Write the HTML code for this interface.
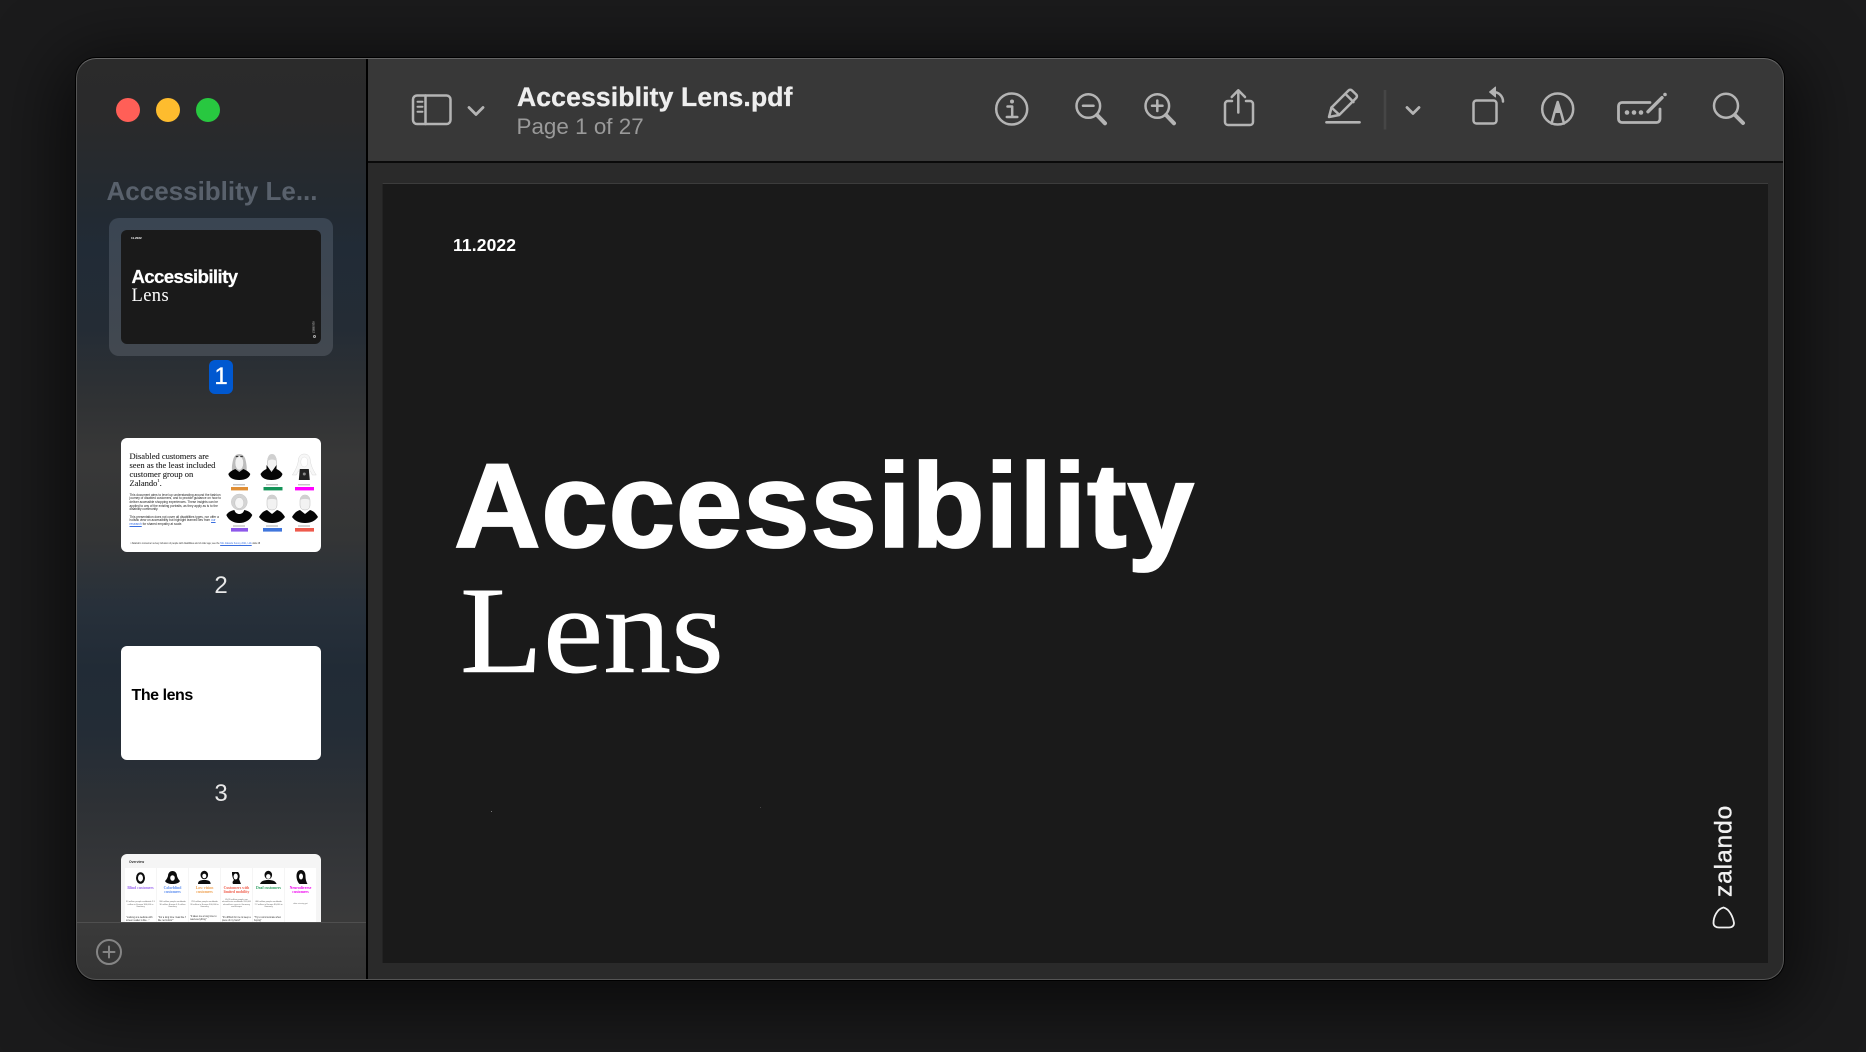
<!DOCTYPE html>
<html lang="en"><head><meta charset="utf-8"><title>Accessiblity Lens.pdf</title>
<style>
*{box-sizing:border-box}
html,body{margin:0;padding:0;width:1866px;height:1052px;overflow:hidden;background:#1b1b1c;font-family:"Liberation Sans",sans-serif}
.a{position:absolute}
.t{position:absolute;white-space:nowrap;line-height:1}
.s{font-family:"Liberation Serif",serif}
#win{left:76px;top:58px;width:1708px;height:922px;border-radius:20px;overflow:hidden;box-shadow:0 0 0 1px #000,0 14px 70px 14px rgba(0,0,0,.62)}
#in{left:-76px;top:-58px;width:1866px;height:1052px}
#side{left:76px;top:58px;width:291px;height:922px;background:linear-gradient(180deg,#2b2b2b 0,#2a2a2b 60px,#232a31 145px,#212b36 190px,#242c35 270px,#303234 345px,#383838 400px,#343536 480px,#27303a 550px,#212b36 610px,#232c36 670px,#2e3135 750px,#37383a 830px,#3a3a3a 864px,#343434 922px)}
#tool{left:368px;top:58px;width:1416px;height:103px;background:#383838}
#cont{left:368px;top:163px;width:1416px;height:817px;background:#2a2a2a}
#page{left:382px;top:183px;width:1386px;height:780px;background:#1a1a1a;border-top:1px solid #3c3c3c;border-left:1px solid #232323}
.th{position:absolute;left:121px;width:200px;height:114px;border-radius:6px;overflow:hidden;background:#fff}
.num{position:absolute;left:121px;width:200px;text-align:center;font-size:24px;line-height:1;color:#e8e8e8}
#frame{left:76px;top:58px;width:1708px;height:922px;border-radius:20px;border:1.5px solid #555;border-top-color:#666;pointer-events:none}
svg{position:absolute;left:0;top:0}
</style></head>
<body>
<div class="a" id="win"><div class="a" id="in">
  <div class="a" id="side"></div>
  <div class="a" style="left:366px;top:58px;width:2px;height:922px;background:#000"></div>
  <div class="a" id="tool"></div>
  <div class="a" style="left:368px;top:161px;width:1416px;height:2px;background:#0a0a0a"></div>
  <div class="a" id="cont"></div>
  <div class="a" id="page"></div>

  <!-- main page -->
  <div class="t" style="left:453px;top:236.7px;font-size:17.5px;font-weight:700;color:#fff;letter-spacing:.12px">11.2022</div>
  <div class="t" style="left:454px;top:446.4px;font-size:120px;font-weight:700;color:#fff;letter-spacing:.53px;-webkit-text-stroke:1.8px #fff">Accessibility</div>
  <div class="t s" style="left:459.5px;top:569px;font-size:124px;color:#fff;transform-origin:0 0;transform:scaleX(1.095);-webkit-text-stroke:.6px #fff">Lens</div>
  <div class="t" style="left:1733px;top:897px;font-size:24.5px;color:#f2f2f2;transform-origin:0 0;transform:rotate(-90deg) translateY(-20.7px);letter-spacing:.9px;-webkit-text-stroke:.35px #f2f2f2">zalando</div>
  <div class="a" style="left:491px;top:811px;width:1px;height:1px;background:#777"></div>
  <div class="a" style="left:760px;top:807px;width:1px;height:1px;background:#444"></div>

  <!-- toolbar text -->
  <div class="t" style="left:517px;top:83.6px;font-size:26.5px;font-weight:700;color:#eee;letter-spacing:.15px;-webkit-text-stroke:.3px #eee">Accessiblity Lens.pdf</div>
  <div class="t" style="left:516.5px;top:115.5px;font-size:22.4px;color:#9a9a9a;letter-spacing:.02px">Page 1 of 27</div>

  <!-- sidebar -->
  <div class="a" style="left:116px;top:98px;width:24px;height:24px;border-radius:50%;background:#ff5f57"></div>
  <div class="a" style="left:156px;top:98px;width:24px;height:24px;border-radius:50%;background:#febc2e"></div>
  <div class="a" style="left:196px;top:98px;width:24px;height:24px;border-radius:50%;background:#28c840"></div>
  <div class="t" style="left:106.5px;top:177.7px;font-size:26px;font-weight:700;color:#59616c">Accessiblity Le...</div>

  <div class="a" style="left:109px;top:218px;width:224px;height:138px;border-radius:10px;background:linear-gradient(180deg,#3a4552,#424850)"></div>
  <div class="th" style="top:230px;background:#1a1a1a">
    <div class="t" style="left:10px;top:7px;font-size:3px;font-weight:700;color:#fff">11.2022</div>
    <div class="t" style="left:10.5px;top:38.300px;font-size:18.5px;font-weight:700;color:#fff;letter-spacing:-.55px;-webkit-text-stroke:.25px #fff">Accessibility</div>
    <div class="t s" style="left:10.5px;top:56.500px;font-size:18.5px;color:#fff;letter-spacing:.4px">Lens</div>
    <div class="t" style="left:195px;top:103px;font-size:3.4px;color:#bbb;transform-origin:0 0;transform:rotate(-90deg) translateY(-3.4px)">zalando</div>
    <div class="a" style="left:192px;top:105px;width:3px;height:3px;border:.5px solid #aaa;border-radius:50%"></div>
  </div>
  <div class="a" style="left:209px;top:360px;width:24px;height:34px;border-radius:6px;background:#0058d0"></div>
  <div class="t" style="left:209px;top:365px;width:24px;text-align:center;font-size:24px;color:#fff;font-weight:400;-webkit-text-stroke:.3px #fff">1</div>

  <!-- thumb 2 -->
  <div class="th" style="top:438px;filter:blur(.3px)">
    <div class="t s" style="left:8.5px;top:13.800px;font-size:8.5px;color:#222;-webkit-text-stroke:.1px #222">Disabled customers are</div>
    <div class="t s" style="left:8.5px;top:22.800px;font-size:8.5px;color:#222;-webkit-text-stroke:.1px #222">seen as the least included</div>
    <div class="t s" style="left:8.5px;top:31.800px;font-size:8.5px;color:#222;-webkit-text-stroke:.1px #222">customer group on</div>
    <div class="t s" style="left:8.5px;top:40.500px;font-size:8.5px;color:#222;-webkit-text-stroke:.1px #222">Zalando<sup style="font-size:4.5px;line-height:0">1</sup>.</div>
    <div class="a" style="left:8.5px;top:55.800px;width:92px;font-size:3.15px;line-height:3.67px;color:#222">This document aims to level up understanding around the fashion journey of disabled customers, and to provide guidance on how to deliver accessible shopping experiences. These insights can be applied to any of the existing portraits, as they apply as is to the disability community.</div>
    <div class="a" style="left:8.5px;top:77.800px;width:92px;font-size:3.15px;line-height:3.67px;color:#222">This presentation does not cover all disabilities types, nor offer a holistic view on accessibility but highlight learned lies from <span style="color:#3a6fe0;text-decoration:underline">our research</span> for shared empathy at scale.</div>
    <div class="t" style="left:9.3px;top:105px;font-size:2.25px;color:#333">¹ Zalando's consumer survey inclusion of people with disabilities and of older age; see the <span style="color:#3a6fe0;text-decoration:underline">SSL Zalando Survey 2021, Link</span> slide 28</div>
    <svg width="200" height="114" viewBox="0 0 200 114">
      <!-- top row -->
      <g transform="translate(118.300 17)">
        <path d="M-6 4c1-3 3-5 6-5s5 2 6 5c1 4 2 9 1 13h-14c-1-4 0-9 1-13z" fill="#bdbdbd"/>
        <ellipse cy="8" rx="4.200" ry="7" fill="#f2f2f2" stroke="#aaa" stroke-width=".3"/>
        <path d="M-3.500 1.500h2.500M1 1.500h2.500" stroke="#333" stroke-width="1.200"/>
        <path d="M-11 19c2-3 5-4 7-5l4 3 4-3c2 1 5 2 7 5-1 4-5 6-11 6s-10-2-11-6z" fill="#050505"/>
      </g>
      <g transform="translate(151 17)">
        <path d="M-4.500 7c0-5 2-7 4.500-7s4.500 2 4.500 7v4c0 3-2 5-4.500 5s-4.500-2-4.500-5z" fill="#f2f2f2" stroke="#999" stroke-width=".4"/>
        <path d="M-4.500 6c0-5 2-7 4.500-7s4.500 2 4.500 7c-3-2-6-2-9 0z" fill="#d0d0d0"/>
        <path d="M-11.500 19c2-3 4-4 6-5v-4l5 7 5-7v4c2 1 4 2 6 5-1 4-5 6-11 6s-10-2-11-6z" fill="#050505"/>
      </g>
      <g transform="translate(183.300 17)">
        <path d="M-6 6c0-5 3-7 6-7s6 2 6 7c1 6 4 11 6 14h-4l-2-4h-12l-2 4h-4c2-3 5-8 6-14z" fill="#f7f7f7" stroke="#d0d0d0" stroke-width=".4"/>
        <ellipse cy="7" rx="3.500" ry="5" fill="#fff" stroke="#ccc" stroke-width=".3"/>
        <path d="M-4.500 14h9l1 11h-11z" fill="#222"/>
        <circle cy="19" r="1.500" fill="#888"/>
      </g>
      <!-- bottom row -->
      <g transform="translate(118.300 57)">
        <circle cy="7" r="8" fill="#d4d4d4" stroke="#c0c0c0" stroke-width=".4"/>
        <ellipse cy="8" rx="4.500" ry="5.500" fill="#f5f5f5" stroke="#aaa" stroke-width=".3"/>
        <path d="M-13 20c2-3 4-4 8-5 1 3 3 4 5 4s4-1 5-4c4 1 6 2 8 5-2 5-7 8-13 8s-11-3-13-8z" fill="#050505"/>
      </g>
      <g transform="translate(151 57)">
        <path d="M-5 6c0-4 2-6 5-6s5 2 5 6v4c0 3-2 5-5 5s-5-2-5-5z" fill="#f2f2f2" stroke="#aaa" stroke-width=".4"/>
        <path d="M-5 5c0-3 2-5 5-5s5 2 5 5c-3-1.500-7-1.500-10 0z" fill="#d0d0d0"/>
        <path d="M-13 22c3-5 5-6 8-7l5 4 5-4c3 1 5 2 8 7-3 4-7 6-13 6s-10-2-13-6z" fill="#050505"/>
      </g>
      <g transform="translate(184 57)">
        <path d="M-5 6c0-4 2-6 5-6s5 2 5 6v4c0 3-2 5-5 5s-5-2-5-5z" fill="#f2f2f2" stroke="#aaa" stroke-width=".4"/>
        <path d="M-5 5c0-3 2-5 5-5s5 2 5 5c-3-1.500-7-1.500-10 0z" fill="#d0d0d0"/>
        <path d="M-13 22c3-5 5-6 8-7l5 4 5-4c3 1 5 2 8 7-3 4-7 6-13 6s-10-2-13-6z" fill="#050505"/>
      </g>
      <g fill="#aaa"><rect x="112" y="46.300" width="12" height="1"/><rect x="145" y="46.300" width="12" height="1"/><rect x="177" y="46.300" width="12" height="1"/><rect x="112" y="87.500" width="12" height="1"/><rect x="145" y="87.500" width="12" height="1"/><rect x="177" y="87.500" width="12" height="1"/></g>
      <rect x="110" y="49" width="17" height="3.400" fill="#e08f35"/>
      <rect x="142.500" y="49" width="19" height="3.400" fill="#149358"/>
      <rect x="174" y="49" width="19" height="3.400" fill="#f0f"/>
      <rect x="110" y="90" width="17" height="3.600" fill="#8d58ea"/>
      <rect x="142" y="90" width="19" height="3.600" fill="#4076dc"/>
      <rect x="174" y="90" width="19" height="3.600" fill="#ee5a4c"/>
    </svg>
  </div>
  <div class="num" style="top:573.7px">2</div>

  <!-- thumb 3 -->
  <div class="th" style="top:646px">
    <div class="t" style="left:10.5px;top:42.4px;font-size:16px;font-weight:700;color:#000;letter-spacing:-.45px">The lens</div>
  </div>
  <div class="num" style="top:782px">3</div>

  <!-- thumb 4 -->
  <div class="th" style="top:854px;background:#f5f5f5;filter:blur(.25px)">
    <div class="t" style="left:8px;top:7px;font-size:3.4px;font-weight:700;color:#333">Overview</div>
    <div class="a" style="left:4px;top:14px;width:31px;height:100px;background:#fff"></div>
    <div class="a" style="left:36px;top:14px;width:31px;height:100px;background:#fff"></div>
    <div class="a" style="left:68px;top:14px;width:31px;height:100px;background:#fff"></div>
    <div class="a" style="left:100px;top:14px;width:31px;height:100px;background:#fff"></div>
    <div class="a" style="left:132px;top:14px;width:31px;height:100px;background:#fff"></div>
    <div class="a" style="left:164px;top:14px;width:31px;height:100px;background:#fff"></div>
    <svg width="200" height="114" viewBox="0 0 200 114">
      <g fill="#0c0c0c">
        <ellipse cx="19.500" cy="24" rx="4.500" ry="5.800"/>
        <path d="M47 22c0-3 2-5 4.500-5s4.500 2 4.500 5c1 3 2 4 3 5-1 2-4 3-7.500 3s-6.500-1-7.500-3c1-1 2-2 3-5z"/>
        <ellipse cx="83.300" cy="21" rx="3.800" ry="4.300"/><path d="M77 30c0-3 2-4 6.300-4s6.300 1 6.300 4z"/>
        <path d="M111 18h6c2 2 2 5 1 7l2 5h-8c-1-2 0-3 1-4-2-3-2-6-2-8z"/>
        <ellipse cx="147.300" cy="21" rx="3.800" ry="4.300"/><path d="M139 30c1-3 4-4 8.300-4s7.300 1 8.300 4z"/>
        <path d="M175.500 22c0-4 2-6 4.500-6s4.500 2 4.500 6c0 4 1 6 2 8h-8c-2-2-3-5-3-8z"/>
      </g>
      <g fill="#fff">
        <ellipse cx="19.500" cy="24" rx="2.500" ry="3.600"/>
        <ellipse cx="51.500" cy="24" rx="2.300" ry="2.800"/>
        <ellipse cx="83.300" cy="22" rx="2" ry="2.300"/>
        <ellipse cx="114.700" cy="22.500" rx="2.100" ry="3"/>
        <ellipse cx="147.300" cy="22.500" rx="2.200" ry="2.400"/>
        <ellipse cx="180" cy="22.500" rx="2" ry="3"/>
      </g>
    </svg>
    <div class="t s" style="left:4px;width:31px;text-align:center;top:33px;font-size:3.8px;font-weight:700;color:#9a66ee">Blind customers</div>
    <div class="a s" style="left:36px;width:31px;text-align:center;top:33px;font-size:3.8px;line-height:3.8px;font-weight:700;color:#5a8cf0">Colorblind customers</div>
    <div class="a s" style="left:68px;width:31px;text-align:center;top:33px;font-size:3.8px;line-height:3.8px;font-weight:700;color:#ee9f4e">Low vision customers</div>
    <div class="a s" style="left:100px;width:31px;text-align:center;top:33px;font-size:3.8px;line-height:3.8px;font-weight:700;color:#f0604f">Customers with limited mobility</div>
    <div class="t s" style="left:132px;width:31px;text-align:center;top:33px;font-size:3.8px;font-weight:700;color:#2c9f60">Deaf customers</div>
    <div class="a s" style="left:164px;width:31px;text-align:center;top:33px;font-size:3.8px;line-height:3.8px;font-weight:700;color:#f000f0">Neurodiverse customers</div>
    <div class="a" style="left:5px;width:29px;text-align:center;top:47px;font-size:2.1px;line-height:2.5px;color:#666">39 million people worldwide 2.5 million in Europe 300,000 in Germany</div>
    <div class="a" style="left:37px;width:29px;text-align:center;top:47px;font-size:2.1px;line-height:2.5px;color:#666">300 million people worldwide 30 million Europe 4.3 million Germany</div>
    <div class="a" style="left:69px;width:29px;text-align:center;top:47px;font-size:2.1px;line-height:2.5px;color:#666">253 million people worldwide 30 million in Europe 900,000 in Germany</div>
    <div class="a" style="left:101px;width:29px;text-align:center;top:45px;font-size:2.1px;line-height:2.4px;color:#666">65-95 million people use wheelchairs worldwide 200,000 wheelchair users in Germany and Europe</div>
    <div class="a" style="left:133px;width:29px;text-align:center;top:47px;font-size:2.1px;line-height:2.5px;color:#666">466 million people worldwide 7.2 million in Europe 80,000 in Germany</div>
    <div class="a" style="left:165px;width:29px;text-align:center;top:49px;font-size:2px;line-height:2.5px;color:#777">data missing yet</div>
    <div class="a" style="left:5px;width:29px;top:62.500px;font-size:2.3px;line-height:3px;color:#333">"Looking at a website with screen reader is like..."</div>
    <div class="a" style="left:37px;width:29px;top:62.500px;font-size:2.3px;line-height:3px;color:#333">"For a long time I was like 'I like red colors'"</div>
    <div class="a" style="left:69px;width:29px;top:61.500px;font-size:2.3px;line-height:3px;color:#333">"It takes me a long time to read everything"</div>
    <div class="a" style="left:101px;width:29px;top:62.500px;font-size:2.3px;line-height:3px;color:#333">"It's difficult for me to keep a piece of my hand"</div>
    <div class="a" style="left:133px;width:29px;top:62.500px;font-size:2.3px;line-height:3px;color:#333">"Try to communicate when buying"</div>
  </div>

  <!-- footer -->
  <div class="a" style="left:77px;top:922px;width:289px;height:58px;background:linear-gradient(180deg,#3a3a3a,#343434);border-top:1.5px solid #4f4f4f"></div>

  <svg width="1866" height="1052" viewBox="0 0 1866 1052" fill="none" stroke="#b4b4b4" stroke-width="2.500" stroke-linecap="round" stroke-linejoin="round">
    <!-- sidebar toggle -->
    <rect x="413" y="95.500" width="37.500" height="28.500" rx="4"/>
    <path d="M425.500 95.500V124"/>
    <path d="M417.500 101.700h5M417.500 106.700h5M417.500 111.700h5" stroke-width="2"/>
    <path d="M469 107.500l7 7 7-7" stroke-width="2.800"/>
    <!-- info -->
    <circle cx="1011.700" cy="109" r="15.500"/>
    <circle cx="1012" cy="101.500" r="2" fill="#b4b4b4" stroke="none"/>
    <path d="M1007.500 106.500h4.700V117M1006.800 117h10.500"/>
    <!-- zoom out -->
    <circle cx="1088.300" cy="106" r="11.800"/>
    <path d="M1097 115l8 8.300" stroke-width="4"/>
    <path d="M1083 105.700h10.500"/>
    <!-- zoom in -->
    <circle cx="1157.300" cy="106" r="11.800"/>
    <path d="M1166 115l8 8.300" stroke-width="4"/>
    <path d="M1152 105.700h10.500M1157.300 100.500v10.500"/>
    <!-- share -->
    <path d="M1232 101h-4a3 3 0 0 0-3 3v18a3 3 0 0 0 3 3h22a3 3 0 0 0 3-3v-18a3 3 0 0 0-3-3h-4"/>
    <path d="M1238.300 112.500V90.500M1231.700 97l6.600-6.700 6.700 6.700"/>
    <!-- highlighter -->
    <path d="M1326.500 122.300h33" stroke-width="2.700"/>
    <path d="M1329 117l2.500-9.500 17-17a2.500 2.500 0 0 1 3.500 0l4.200 4a2.500 2.500 0 0 1 0 3.500l-17 17z"/>
    <path d="M1345.500 94l8 8M1331.500 107.500l7.500 7"/>
    <path d="M1385 90v39.500" stroke="#464646" stroke-linecap="butt"/>
    <path d="M1407 107.500l6 6 6-6" stroke-width="2.800"/>
    <!-- rotate -->
    <rect x="1473.500" y="100.500" width="23" height="23" rx="3"/>
    <path d="M1503 101.500c0-5-4-9.500-9.500-9.500"/>
    <path d="M1495.500 87v10l-6-5z" fill="#b4b4b4" stroke-width="1"/>
    <!-- markup -->
    <circle cx="1557.700" cy="109" r="15.500"/>
    <path d="M1551.500 123.500l3-11 3.200-10.500 3.300 10.500 3 11"/>
    <path d="M1557.700 102.500l-3 10h6z" fill="#b4b4b4" stroke-width="1"/>
    <!-- signature -->
    <path d="M1650 102.500h-28a3.500 3.500 0 0 0-3.500 3.500v13a3.500 3.500 0 0 0 3.500 3.500h34.500a3.500 3.500 0 0 0 3.500-3.500v-10" stroke-width="2.800"/>
    <circle cx="1627" cy="112.500" r="2.300" fill="#b4b4b4" stroke="none"/>
    <circle cx="1634" cy="112.500" r="2.300" fill="#b4b4b4" stroke="none"/>
    <circle cx="1641" cy="112.500" r="2.300" fill="#b4b4b4" stroke="none"/>
    <path d="M1648 111.700l14-14" stroke-width="3.400"/>
    <circle cx="1665" cy="94.500" r="1.800" fill="#b4b4b4" stroke="none"/>
    <!-- search -->
    <circle cx="1726" cy="105.700" r="12"/>
    <path d="M1735 115l8 8" stroke-width="4"/>
    <!-- plus -->
    <circle cx="109" cy="952" r="12" stroke="#858585" stroke-width="2"/>
    <path d="M103.500 952h11M109 946.500v11" stroke="#858585" stroke-width="2"/>
    <!-- zalando logo -->
    <path d="M1723.500 907.500C1717 909 1713.500 917 1713.500 923C1713.500 926 1716 927.500 1719 927.500H1729C1732 927.500 1734 926 1734 923C1733 917 1729.500 909 1723.500 907.500Z" stroke="#f0f0f0" stroke-width="1.800"/>
  </svg>
  <div class="a" id="frame"></div>
</div></div>
</body></html>
